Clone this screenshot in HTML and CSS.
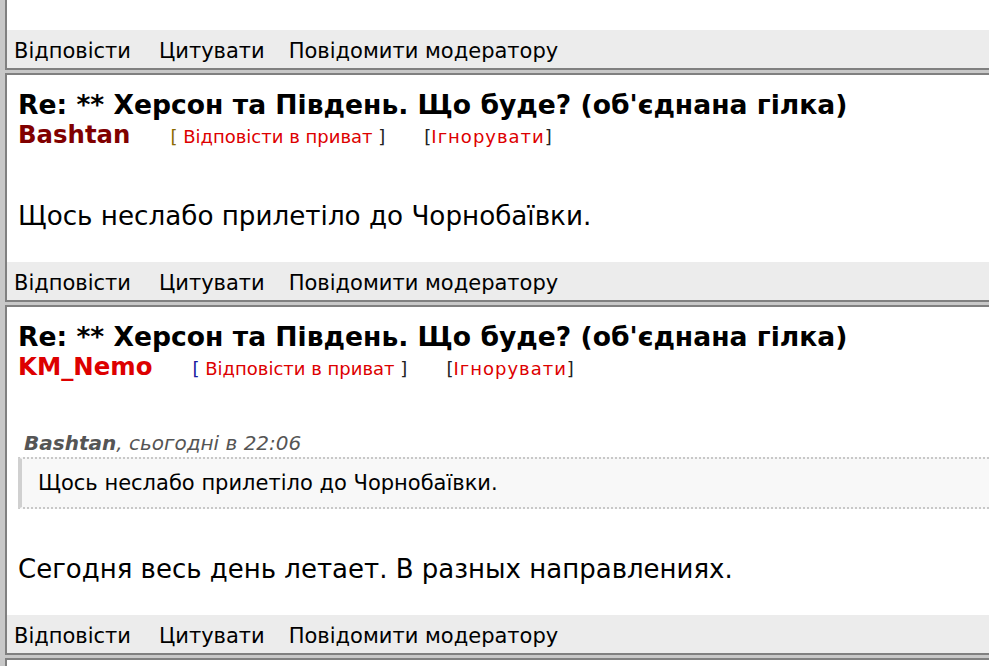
FILE: index.html
```html
<!DOCTYPE html>
<html lang="uk">
<head>
  <meta charset="UTF-8">
  <title>Херсон та Південь</title>
  <link rel="stylesheet" href="styles.css">
</head>
<body>
  <div class="thread">
    <!-- previous post, cut off at the top -->
    <div class="post post-cut">
      <div class="post-body"></div>
      <div class="post-actions">
        <a href="#">Відповісти</a>
        <a href="#">Цитувати</a>
        <a href="#">Повідомити модератору</a>
      </div>
    </div>

    <div class="post">
      <div class="post-head">
        <div class="post-title">Re: ** Херсон та Південь. Що буде? (об'єднана гілка)</div>
        <div class="post-meta">
          <span class="author author-dark">Bashtan</span>
          <span class="meta-link"><span class="br br-gold">[</span> <a href="#">Відповісти в приват</a> <span class="br">]</span></span>
          <span class="meta-link"><span class="br">[</span><a href="#" class="ignore">Ігнорувати</a><span class="br">]</span></span>
        </div>
      </div>
      <div class="post-body">Щось неслабо прилетіло до Чорнобаївки.</div>
      <div class="post-actions">
        <a href="#">Відповісти</a>
        <a href="#">Цитувати</a>
        <a href="#">Повідомити модератору</a>
      </div>
    </div>

    <div class="post">
      <div class="post-head">
        <div class="post-title">Re: ** Херсон та Південь. Що буде? (об'єднана гілка)</div>
        <div class="post-meta">
          <span class="author author-red">KM_Nemo</span>
          <span class="meta-link"><span class="br br-blue">[</span> <a href="#">Відповісти в приват</a> <span class="br">]</span></span>
          <span class="meta-link"><span class="br">[</span><a href="#" class="ignore">Ігнорувати</a><span class="br">]</span></span>
        </div>
      </div>
      <div class="post-body">
        <div class="quote-head"><b>Bashtan</b>, сьогодні в 22:06</div>
        <div class="quote">Щось неслабо прилетіло до Чорнобаївки.</div>
        <div class="reply">Сегодня весь день летает. В разных направлениях.</div>
      </div>
      <div class="post-actions">
        <a href="#">Відповісти</a>
        <a href="#">Цитувати</a>
        <a href="#">Повідомити модератору</a>
      </div>
    </div>

    <div class="post post-next"></div>
  </div>
</body>
</html>
```

FILE: styles.css
```css
* {
  margin: 0;
  padding: 0;
  box-sizing: border-box;
  font-family: "DejaVu Sans", Verdana, sans-serif;
}

body {
  background-color: #c8c8c8;
  overflow: hidden;
  height: 666px;
}

.thread {
  padding-left: 5px;
  display: flex;
  flex-direction: column;
  gap: 3px;
}

.post {
  background-color: #fff;
  border: 2px solid #808080;
  border-right: none;
}

.post-cut {
  border-top: none;
}

.post-cut .post-body {
  height: 30px;
  padding: 0;
}

.post-next {
  height: 20px;
  border-bottom: none;
}

.post-head {
  padding: 15px 0 0 11px;
}

.post-title {
  font-size: 26.6px;
  font-weight: bold;
  color: #000;
  line-height: 30px;
}

.post-meta {
  display: flex;
  align-items: baseline;
  line-height: 30px;
}

.author {
  font-size: 24.4px;
  font-weight: bold;
  margin-right: 40px;
}

.author-dark {
  color: #800000;
}

.author-red {
  color: #dd0000;
}

.meta-link {
  font-size: 18px;
  margin-right: 39px;
}

.meta-link a {
  color: #dd0000;
  text-decoration: none;
}

.meta-link .ignore {
  letter-spacing: 1px;
}

.br {
  color: #222;
}

.br-gold {
  color: #8a6a00;
}

.br-blue {
  color: #1a1aa0;
}

.post-body {
  padding: 49px 0 31px 11px;
  font-size: 26.2px;
  line-height: 30px;
  color: #000;
}

.quote-head {
  font-size: 20px;
  font-style: italic;
  color: #555;
  line-height: 24px;
  margin: -2px 0 2px 6px;
}

.quote {
  font-size: 21px;
  line-height: 26px;
  background-color: #f8f8f8;
  border-left: 4px solid #d0d0d0;
  border-top: 2px dotted #c8c8c8;
  border-bottom: 2px dotted #c8c8c8;
  padding: 11px 16px;
  margin-bottom: 45px;
}

.reply {
  font-size: 26px;
  line-height: 30px;
}

.post-actions {
  background-color: #ececec;
  height: 38px;
  display: flex;
  align-items: center;
  padding: 3px 0 0 7px;
  gap: 24px;
}

.post-actions a {
  font-size: 21px;
  color: #000;
  text-decoration: none;
}

.post-actions a:first-child {
  margin-right: 4px;
}
```
